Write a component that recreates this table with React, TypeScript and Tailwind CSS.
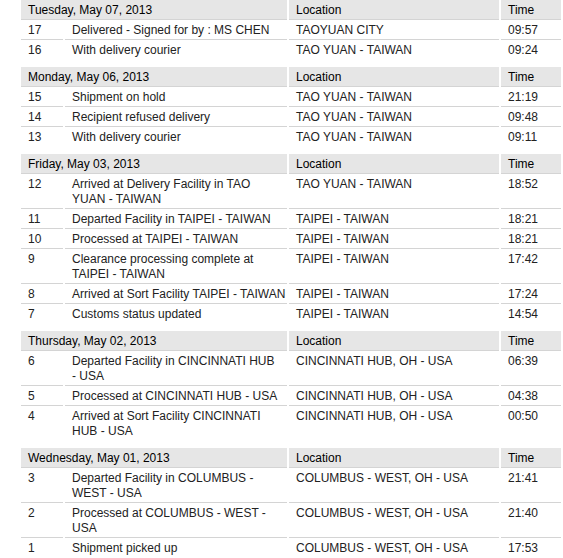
const days: { date: string; rows: [string, string, string, string][] }[] = [
  {
    date: "Tuesday, May 07, 2013",
    rows: [
      ["17", "Delivered - Signed for by : MS CHEN", "TAOYUAN CITY", "09:57"],
      ["16", "With delivery courier", "TAO YUAN - TAIWAN", "09:24"],
    ],
  },
  {
    date: "Monday, May 06, 2013",
    rows: [
      ["15", "Shipment on hold", "TAO YUAN - TAIWAN", "21:19"],
      ["14", "Recipient refused delivery", "TAO YUAN - TAIWAN", "09:48"],
      ["13", "With delivery courier", "TAO YUAN - TAIWAN", "09:11"],
    ],
  },
  {
    date: "Friday, May 03, 2013",
    rows: [
      ["12", "Arrived at Delivery Facility in TAO\nYUAN - TAIWAN", "TAO YUAN - TAIWAN", "18:52"],
      ["11", "Departed Facility in TAIPEI - TAIWAN", "TAIPEI - TAIWAN", "18:21"],
      ["10", "Processed at TAIPEI - TAIWAN", "TAIPEI - TAIWAN", "18:21"],
      ["9", "Clearance processing complete at\nTAIPEI - TAIWAN", "TAIPEI - TAIWAN", "17:42"],
      ["8", "Arrived at Sort Facility TAIPEI - TAIWAN", "TAIPEI - TAIWAN", "17:24"],
      ["7", "Customs status updated", "TAIPEI - TAIWAN", "14:54"],
    ],
  },
  {
    date: "Thursday, May 02, 2013",
    rows: [
      ["6", "Departed Facility in CINCINNATI HUB\n- USA", "CINCINNATI HUB, OH - USA", "06:39"],
      ["5", "Processed at CINCINNATI HUB - USA", "CINCINNATI HUB, OH - USA", "04:38"],
      ["4", "Arrived at Sort Facility CINCINNATI\nHUB - USA", "CINCINNATI HUB, OH - USA", "00:50"],
    ],
  },
  {
    date: "Wednesday, May 01, 2013",
    rows: [
      ["3", "Departed Facility in COLUMBUS -\nWEST - USA", "COLUMBUS - WEST, OH - USA", "21:41"],
      ["2", "Processed at COLUMBUS - WEST -\nUSA", "COLUMBUS - WEST, OH - USA", "21:40"],
      ["1", "Shipment picked up", "COLUMBUS - WEST, OH - USA", "17:53"],
    ],
  },
];

const th = "border-b border-[#d4d4d4] bg-[#e6e6e6] px-[7px] pt-[3px] pb-px text-left font-normal text-black";

function DayTable({ date, rows }: (typeof days)[number]) {
  return (
    <table className="mb-[7px] w-[544px] table-fixed border-separate border-spacing-x-0.5 border-spacing-y-0">
      <colgroup>
        <col className="w-[42px]" />
        <col className="w-[222px]" />
        <col className="w-[210px]" />
        <col className="w-[60px]" />
      </colgroup>
      <thead>
        <tr>
          <th colSpan={2} className={th}>{date}</th>
          <th className={th}>Location</th>
          <th className={th}>Time</th>
        </tr>
      </thead>
      <tbody>
        {rows.map((r, i) => {
          const td =
            "whitespace-pre px-[7px] pt-[3px] pb-px align-top text-[#222] border-b " +
            (i === rows.length - 1 ? "border-transparent" : "border-[#d4d4d4]");
          return (
            <tr key={r[0]}>
              <td className={td}>{r[0]}</td>
              <td className={td}>{r[1]}</td>
              <td className={td}>{r[2]}</td>
              <td className={td}>{r[3]}</td>
            </tr>
          );
        })}
      </tbody>
    </table>
  );
}

export default function App() {
  return (
    <div className="h-[558px] w-[563px] overflow-hidden bg-white pl-[19px] font-['Liberation_Sans',Arial,sans-serif] text-[12px] leading-[15px]">
      {days.map((d) => (
        <DayTable key={d.date} {...d} />
      ))}
    </div>
  );
}
